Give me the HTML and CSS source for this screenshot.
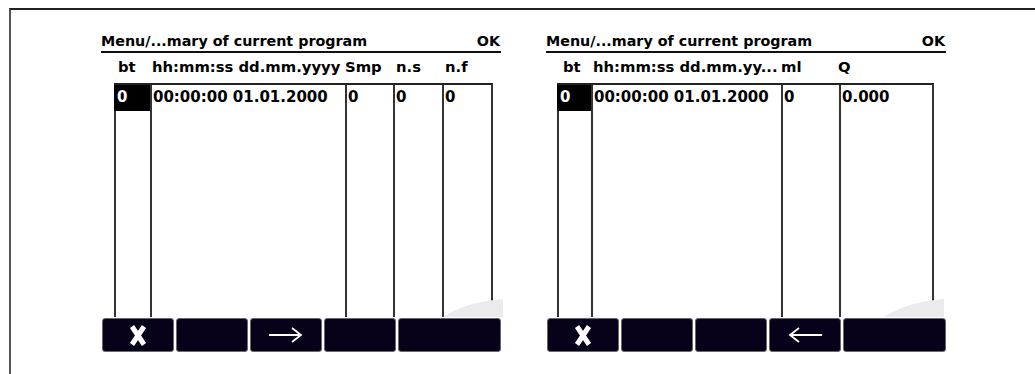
FILE: index.html
```html
<!DOCTYPE html>
<html lang="en">
<head>
    <meta charset="UTF-8">
    <meta name="viewport" content="width=device-width, initial-scale=1.0">
    <title>Summary of current program</title>
    <link rel="stylesheet" href="styles.css">
</head>
<body>
<div class="frame">

    <!-- Screen 1: samples -->
    <div class="screen">
        <div class="title">
            <span>Menu/...mary of current program</span>
            <span>OK</span>
        </div>
        <div class="head cols-a">
            <span class="h-bt">bt</span>
            <span class="h-time">hh:mm:ss dd.mm.yyyy</span>
            <span>Smp</span>
            <span class="h-ns">n.s</span>
            <span class="h-ns">n.f</span>
        </div>
        <div class="grid cols-a">
            <div class="col"><div class="sel">0</div></div>
            <div class="col"><div class="cell">00:00:00 01.01.2000</div></div>
            <div class="col"><div class="cell">0</div></div>
            <div class="col"><div class="cell">0</div></div>
            <div class="col"><div class="cell">0</div></div>
            <svg class="curl" width="60" height="18" viewBox="0 0 60 18"><path d="M0 18 Q22 3 60 0 L60 18 Z" fill="#ebebeb"/></svg>
        </div>
        <div class="keys">
            <div class="key">
                <svg width="18" height="21" viewBox="0 0 18 21"><path d="M3 1.5 L15 19.5 M15 1.5 L3 19.5" stroke="#fff" stroke-width="5"/></svg>
            </div>
            <div class="key"></div>
            <div class="key">
                <svg width="34" height="18" viewBox="0 0 34 18"><path d="M0 9 H32 M23 2 L32 9 L23 16" stroke="#fff" stroke-width="1.8" fill="none"/></svg>
            </div>
            <div class="key"></div>
            <div class="key wide"></div>
        </div>
    </div>

    <!-- Screen 2: volume -->
    <div class="screen">
        <div class="title">
            <span>Menu/...mary of current program</span>
            <span>OK</span>
        </div>
        <div class="head cols-b">
            <span class="h-bt2">bt</span>
            <span class="h-time">hh:mm:ss dd.mm.yy...</span>
            <span>ml</span>
            <span class="h-q">Q</span>
        </div>
        <div class="grid cols-b">
            <div class="col"><div class="sel">0</div></div>
            <div class="col"><div class="cell">00:00:00 01.01.2000</div></div>
            <div class="col"><div class="cell">0</div></div>
            <div class="col"><div class="cell">0.000</div></div>
            <svg class="curl" width="60" height="18" viewBox="0 0 60 18"><path d="M0 18 Q22 3 60 0 L60 18 Z" fill="#ebebeb"/></svg>
        </div>
        <div class="keys">
            <div class="key">
                <svg width="18" height="21" viewBox="0 0 18 21"><path d="M3 1.5 L15 19.5 M15 1.5 L3 19.5" stroke="#fff" stroke-width="5"/></svg>
            </div>
            <div class="key"></div>
            <div class="key"></div>
            <div class="key">
                <svg width="34" height="18" viewBox="0 0 34 18"><path d="M34 9 H2 M11 2 L2 9 L11 16" stroke="#fff" stroke-width="1.8" fill="none"/></svg>
            </div>
            <div class="key wide"></div>
        </div>
    </div>

</div>
</body>
</html>
```

FILE: styles.css
```css
body {
    margin: 0;
    background-color: #fff;
    font-family: "DejaVu Sans", sans-serif;
    font-weight: bold;
    color: #000;
    overflow: hidden;
}

.frame {
    margin: 8px 0 0 9px;
    height: 366px;
    box-sizing: border-box;
    border-top: 2px solid #222;
    border-left: 2px solid #555;
    padding: 22px 0 0 90px;
    display: flex;
    gap: 45px;
}

.screen {
    width: 400px;
    display: flex;
    flex-direction: column;
}

.title {
    height: 19px;
    line-height: 19px;
    font-size: 14.3px;
    display: flex;
    justify-content: space-between;
    border-bottom: 2px solid #111;
    padding: 0 1px 0 0;
}

.head {
    height: 30px;
    font-size: 14.8px;
    line-height: 16px;
    display: grid;
    align-items: end;
    padding-bottom: 8px;
    box-sizing: border-box;
}

.cols-a {
    margin-left: 13px;
    grid-template-columns: 36px 195px 48px 49px 49px;
}

.cols-b {
    margin-left: 11px;
    grid-template-columns: 34px 190px 58px 93px;
}

.h-bt { padding-left: 4px; }
.h-bt2 { padding-left: 6px; }
.h-time { padding-left: 2px; }
.h-ns { padding-left: 3px; }
.h-q { margin-left: -1px; }

.grid {
    position: relative;
    align-self: flex-start;
    display: grid;
    height: 232px;
    border-top: 2px solid #222;
    border-right: 2px solid #333;
    font-size: 15px;
}

.col {
    border-left: 2px solid #333;
}

.sel {
    margin-left: -2px;
    height: 26px;
    line-height: 24px;
    background-color: #000;
    color: #fff;
    padding-left: 3px;
}

.cell {
    height: 26px;
    line-height: 24px;
    padding-left: 1px;
}

.curl {
    position: absolute;
    right: -12px;
    bottom: 0;
}

.keys {
    display: flex;
    gap: 2px;
    margin-top: 1px;
    padding-left: 1px;
}

.key {
    width: 72px;
    height: 34px;
    box-sizing: border-box;
    background-color: #07021a;
    border: 1px solid #6a6a6a;
    border-radius: 3px;
    display: flex;
    align-items: center;
    justify-content: center;
}

.key.wide {
    flex: 1;
}
```
